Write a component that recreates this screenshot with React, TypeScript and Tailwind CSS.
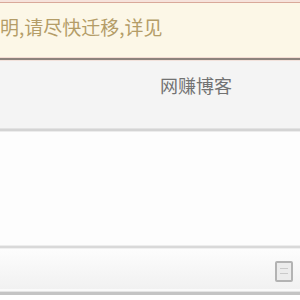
import React from "react";

export default function App() {
  const cjk = { fontFamily: '"Noto Sans CJK SC", "Noto Sans", sans-serif' };
  return (
    <div className="w-[300px] h-[300px] overflow-hidden bg-white flex flex-col" style={cjk}>
      <div className="h-[2px] bg-[#f6e3dc]" />
      <div className="h-[1px] bg-[#d9a99a]" />
      <div className="h-[54px] bg-[#fcf7e7] flex items-center pb-[8px]">
        <span className="text-[19px] leading-none text-[#b49d68] whitespace-nowrap">
          明,请尽快迁移,详见
        </span>
      </div>
      <div className="h-[1px] bg-[#f3dcd3]" />
      <div className="h-[2px] bg-[#8d837d]" />
      <div className="h-[1px] bg-[#f2e2dc]" />
      <div className="h-[67px] bg-[#f4f4f4] flex pl-[160px] pt-[15px]">
        <span className="text-[18px] leading-none text-[#727272] whitespace-nowrap">网赚博客</span>
      </div>
      <div className="h-[1px] bg-[#e2e2e2]" />
      <div className="h-[2px] bg-[#d4d4d4]" />
      <div className="h-[1px] bg-[#ececec]" />
      <div className="h-[113px] bg-[#fdfdfd]" />
      <div className="h-[1px] bg-[#ededed]" />
      <div className="h-[2px] bg-[#d9d9d9]" />
      <div className="h-[1px] bg-[#f0f0f0]" />
      <div className="h-[40px] bg-gradient-to-b from-[#fdfdfd] to-[#f1f1f1] flex items-center justify-end pr-[7px] pt-[4px]">
        <div className="w-[18px] h-[21px] border-2 border-[#b3b3b3] bg-[#ececec] rounded-[2px] flex flex-col justify-center gap-[4px] px-[3px]">
          <div className="h-[1px] bg-[#cacaca]" />
          <div className="h-[1px] bg-[#cacaca]" />
        </div>
      </div>
      <div className="h-[2px] bg-[#fafafa]" />
      <div className="h-[1px] bg-[#e4e4e4]" />
      <div className="h-[3px] bg-[#c4c4c4]" />
      <div className="flex-1 bg-white" />
    </div>
  );
}
